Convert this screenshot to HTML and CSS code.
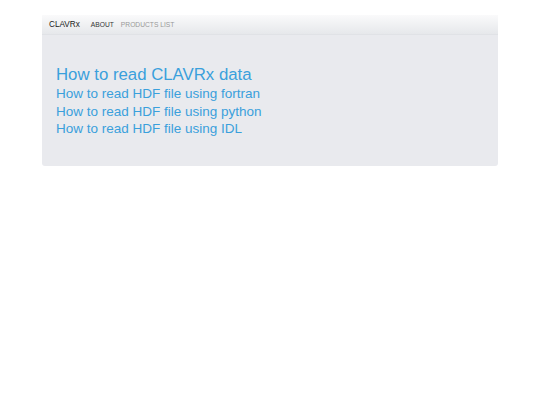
FILE: index.html
```html
<!DOCTYPE html>
<html>
<head>
<meta charset="utf-8">
<link rel="stylesheet" href="styles.css">
</head>
<body>
<div class="container">
  <div class="navbar">
    <span class="brand">CLAVRx</span>
    <span class="nav-item active">ABOUT</span>
    <span class="nav-item">PRODUCTS LIST</span>
  </div>
  <div class="panel">
    <a class="title" href="#">How to read CLAVRx data</a>
    <a class="link" href="#">How to read HDF file using fortran</a>
    <a class="link" href="#">How to read HDF file using python</a>
    <a class="link" href="#">How to read HDF file using IDL</a>
  </div>
</div>
</body>
</html>
```
FILE: styles.css
```css
html, body {
  margin: 0;
  padding: 0;
  background: #ffffff;
  font-family: "Liberation Sans", Arial, sans-serif;
}
.container {
  width: 456px;
  margin: 15px auto 0;
  background: #e9eaee;
  border-radius: 0 0 3px 3px;
  height: 151px;
}
.navbar {
  height: 20px;
  display: flex;
  align-items: center;
  padding-left: 7px;
  background: linear-gradient(#fafafb, #e6e8eb);
  border-bottom: 1px solid #e0e2e6;
  box-sizing: border-box;
}
.brand {
  font-size: 8.2px;
  color: #222;
  margin-right: 11px;
}
.nav-item {
  font-size: 6.7px;
  color: #999;
  margin-right: 7px;
}
.nav-item.active {
  color: #333;
}
.panel {
  display: flex;
  flex-direction: column;
  padding: 29px 14px 0;
}
.panel a {
  color: #3aa0dc;
  text-decoration: none;
}
.title {
  font-size: 16.8px;
  line-height: 21px;
}
.link {
  font-size: 13.5px;
  line-height: 17.5px;
}
```
